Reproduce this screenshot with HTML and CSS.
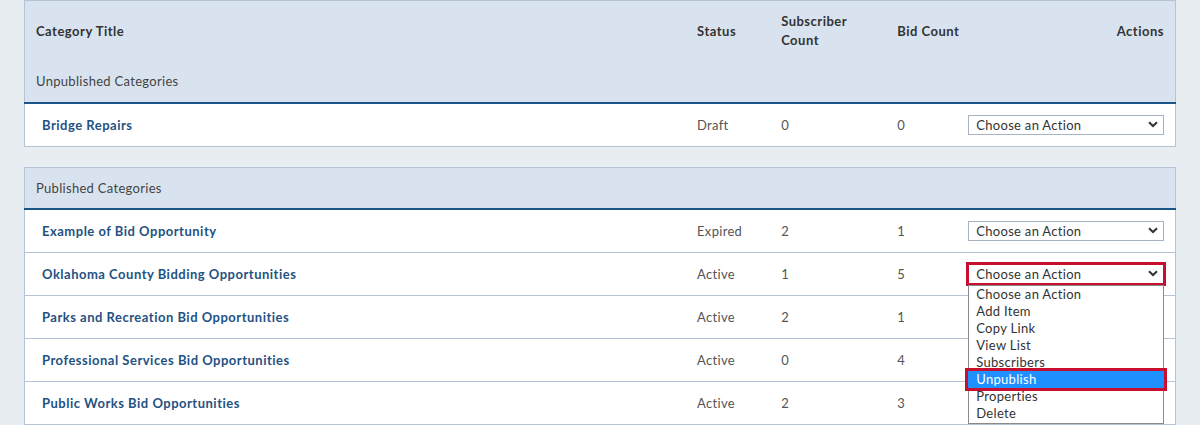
FILE: index.html
```html
<!DOCTYPE html>
<html lang="en">
<head>
    <meta charset="UTF-8">
    <title>Categories</title>
    <link rel="stylesheet" href="styles.css">
</head>
<body>
<div class="page">

    <table class="cat-table">
        <colgroup>
            <col class="c-title"><col class="c-status"><col class="c-subs"><col class="c-bids"><col class="c-actions">
        </colgroup>
        <thead>
            <tr class="head-row">
                <th>Category Title</th>
                <th>Status</th>
                <th>Subscriber<br>Count</th>
                <th>Bid Count</th>
                <th class="right">Actions</th>
            </tr>
            <tr class="group-row">
                <th colspan="5">Unpublished Categories</th>
            </tr>
        </thead>
        <tbody>
            <tr>
                <td class="title">Bridge Repairs</td>
                <td>Draft</td>
                <td>0</td>
                <td>0</td>
                <td><div class="select"><span>Choose an Action</span><svg width="10" height="7" viewBox="0 0 10 7"><path d="M1 1.2 L5 5 L9 1.2" fill="none" stroke="#333" stroke-width="2"/></svg></div></td>
            </tr>
        </tbody>
    </table>

    <table class="cat-table second">
        <colgroup>
            <col class="c-title"><col class="c-status"><col class="c-subs"><col class="c-bids"><col class="c-actions">
        </colgroup>
        <thead>
            <tr class="group-row">
                <th colspan="5">Published Categories</th>
            </tr>
        </thead>
        <tbody>
            <tr>
                <td class="title">Example of Bid Opportunity</td>
                <td>Expired</td>
                <td>2</td>
                <td>1</td>
                <td><div class="select"><span>Choose an Action</span><svg width="10" height="7" viewBox="0 0 10 7"><path d="M1 1.2 L5 5 L9 1.2" fill="none" stroke="#333" stroke-width="2"/></svg></div></td>
            </tr>
            <tr>
                <td class="title">Oklahoma County Bidding Opportunities</td>
                <td>Active</td>
                <td>1</td>
                <td>5</td>
                <td class="open-cell">
                    <div class="select marked"><span>Choose an Action</span><svg width="10" height="7" viewBox="0 0 10 7"><path d="M1 1.2 L5 5 L9 1.2" fill="none" stroke="#333" stroke-width="2"/></svg></div>
                    <ul class="menu">
                        <li>Choose an Action</li>
                        <li>Add Item</li>
                        <li>Copy Link</li>
                        <li>View List</li>
                        <li>Subscribers</li>
                        <li class="picked">Unpublish</li>
                        <li>Properties</li>
                        <li>Delete</li>
                    </ul>
                </td>
            </tr>
            <tr>
                <td class="title">Parks and Recreation Bid Opportunities</td>
                <td>Active</td>
                <td>2</td>
                <td>1</td>
                <td></td>
            </tr>
            <tr>
                <td class="title">Professional Services Bid Opportunities</td>
                <td>Active</td>
                <td>0</td>
                <td>4</td>
                <td></td>
            </tr>
            <tr>
                <td class="title">Public Works Bid Opportunities</td>
                <td>Active</td>
                <td>2</td>
                <td>3</td>
                <td></td>
            </tr>
        </tbody>
    </table>

</div>
</body>
</html>
```

FILE: styles.css
```css
body {
    margin: 0;
    background: #e8edf2;
    font-family: Lato, 'Open Sans', sans-serif;
    font-size: 13px;
    letter-spacing: 0.3px;
    color: #444;
}

.page {
    padding: 0 24px;
}

.cat-table {
    width: 100%;
    table-layout: fixed;
    border-collapse: collapse;
    background: #fff;
    border: 1px solid #b4c3d5;
}
.cat-table.second {
    margin-top: 20px;
}

.c-title { width: 661px; }
.c-status { width: 84px; }
.c-subs { width: 116px; }
.c-bids { width: 71px; }
.c-actions { width: 218px; }

.cat-table th {
    text-align: left;
    font-weight: normal;
    padding: 0 11px;
    background: #d9e3ef;
    color: #333;
    white-space: nowrap;
}
.head-row th {
    font-weight: bold;
    height: 59px;
    vertical-align: middle;
    padding-top: 2px;
    line-height: 19px;
    box-sizing: border-box;
    letter-spacing: 0.5px;
}
.head-row th.right {
    text-align: right;
}
.group-row th {
    height: 42px;
    border-bottom: 2px solid #1b5486;
    color: #444;
}
.cat-table.second .group-row th {
    height: 40px;
}

.cat-table td {
    height: 42px;
    padding: 0 11px;
    border-bottom: 1px solid #b4c3d5;
    color: #555;
    vertical-align: middle;
}
.cat-table td.title {
    padding-left: 17px;
    font-weight: bold;
    color: #1f5283;
    letter-spacing: 0.5px;
}

.select {
    width: 196px;
    height: 20px;
    box-sizing: border-box;
    border: 1px solid #a6b3c2;
    background: #fff;
    display: flex;
    align-items: center;
    justify-content: space-between;
    padding: 0 5px 0 7px;
    color: #333;
}
.select.marked {
    outline: 3px solid #c8102e;
    outline-offset: -1px;
}

.open-cell {
    position: relative;
}
.menu {
    position: absolute;
    top: 32px;
    left: 11px;
    width: 196px;
    box-sizing: border-box;
    margin: 0;
    padding: 0 0 1px;
    list-style: none;
    background: #fff;
    border: 1px solid #8a8a8a;
    z-index: 2;
}
.menu li {
    height: 17px;
    line-height: 17px;
    padding-left: 7px;
    color: #333;
}
.menu li.picked {
    background: #1e90ff;
    color: #fff;
    outline: 3px solid #c8102e;
    margin: 0 -1px 0 -1px;
    padding-left: 8px;
}
```
